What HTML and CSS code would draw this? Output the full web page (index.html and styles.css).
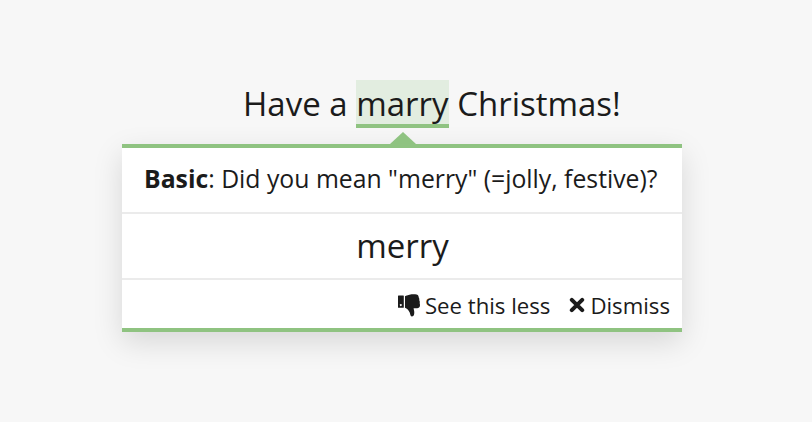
FILE: index.html
```html
<!DOCTYPE html>
<html lang="en">
<head>
  <meta charset="UTF-8">
  <meta name="viewport" content="width=device-width, initial-scale=1.0">
  <title>Suggestion popup</title>
  <link rel="stylesheet" href="styles.css">
</head>
<body>
  <div class="editor">
    <p class="sentence">Have a <span class="mistake">marry</span> Christmas!</p>

    <div class="popup">
      <div class="popup-message"><strong>Basic</strong>: Did you mean "merry" (=jolly, festive)?</div>
      <button class="popup-suggestion">merry</button>
      <div class="popup-actions">
        <button class="action">
          <svg class="icon-thumb" width="23" height="23" viewBox="0 0 23 23">
            <path fill-rule="evenodd" d="M.5 1.500h4.800q.5 0 .5.500v11.300q0 .500-.500.500h-4.800q-.500 0-.500-.500V2q0-.500.500-.500zM2.800 10a1 1 0 1 0 .01 0z"/>
            <path d="M7 2.200C10 1.500 11 .3 15 .3h2c2.500 0 3.700 1 3.700 3 .6 1 .8 2 .6 3 .6 1 .7 2 .4 3 .8 2.700 0 4.900-2.500 4.900h-3.600c.2 1.800 1 3 .6 5.500-.2 1.800-1 2.700-2.400 2.700-1.500 0-1.500-2.500-2.100-4C10.800 16.500 9 14.500 7 13.800z"/>
          </svg>
          <span>See this less</span>
        </button>
        <button class="action action-dismiss">
          <svg class="icon-close" width="16" height="16" viewBox="0 0 16 16">
            <path d="M2.800 2.800l10.400 10.400M13.200 2.800L2.800 13.200"/>
          </svg>
          <span>Dismiss</span>
        </button>
      </div>
    </div>
  </div>
</body>
</html>
```
FILE: styles.css
```css
* {
  margin: 0;
  padding: 0;
  box-sizing: border-box;
}

body {
  font-family: "Open Sans", "Noto Sans", sans-serif;
  background: #f7f7f7;
  color: #1b1b1b;
  min-height: 100vh;
}

.editor {
  width: 560px;
  margin-left: 122px;
  padding-top: 80px;
}

.sentence {
  padding-left: 121px;
  font-size: 33px;
  line-height: 48px;
  height: 64px;
  white-space: nowrap;
}

.mistake {
  display: inline-block;
  height: 48px;
  background: #e2ede0;
  border-bottom: 4px solid #8fc381;
}

.popup {
  position: relative;
  background: #fff;
  border-top: 4px solid #8fc381;
  border-bottom: 4px solid #8fc381;
  box-shadow: 0 10px 28px rgba(0, 0, 0, 0.13);
}

/* arrow pointing at the marked word */
.popup::before {
  content: "";
  position: absolute;
  top: -16px;
  left: 268px;
  border: 13px solid transparent;
  border-top: 0;
  border-bottom: 12px solid #8fc381;
}

.popup-message {
  height: 66px;
  padding-left: 22px;
  font-size: 24.78px;
  line-height: 61px;
  white-space: nowrap;
  border-bottom: 2px solid #ebebeb;
}

button {
  font: inherit;
  color: inherit;
  background: none;
  border: none;
  cursor: pointer;
}

.popup-suggestion {
  display: block;
  width: 100%;
  height: 66px;
  padding-left: 1px;
  font-size: 33px;
  line-height: 64px;
  border-bottom: 2px solid #ebebeb;
}

.popup-actions {
  display: flex;
  justify-content: flex-end;
  gap: 19px;
  height: 48px;
  padding-top: 4px;
  padding-right: 12px;
  font-size: 22.2px;
}

.action {
  display: flex;
  align-items: center;
  gap: 4px;
  line-height: 44px;
}

.action-dismiss {
  gap: 5px;
}

.icon-thumb {
  fill: #1b1b1b;
  margin-top: -2px;
}

.icon-close {
  stroke: #1b1b1b;
  stroke-width: 4;
  stroke-linecap: round;
  margin-top: -2px;
}
```
